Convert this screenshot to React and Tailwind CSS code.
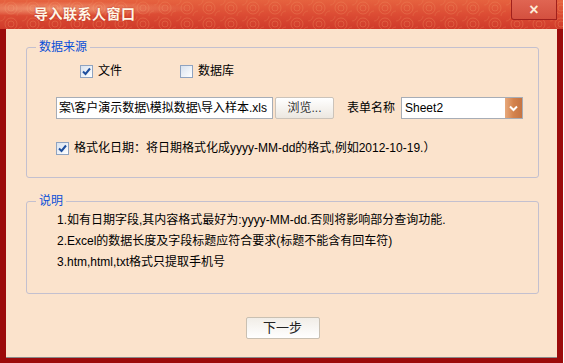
import React from 'react';

const font = "font-['Liberation_Sans','Noto_Sans_CJK_SC',sans-serif]";

function Check({ checked }) {
    return (
        <span className="w-[13px] h-[13px] shrink-0 border border-[#8fa3c0] bg-linear-to-br from-[#d9e2ee] to-white flex items-center justify-center">
            {checked && (
                <svg width="9" height="9" viewBox="0 0 9 9">
                    <path d="M1 4.5 L3.5 7 L8 1.5" stroke="#1e4f9e" strokeWidth="2" fill="none" />
                </svg>
            )}
        </span>
    );
}

function Group({ title, className, children }) {
    return (
        <div className={`relative border border-[#c3c0cf] rounded-[3px] ${className}`}>
            <span className="absolute -top-[9px] left-[9px] px-[3px] bg-[#fbe3cc] text-[12px] leading-[16px] text-[#0a4fd8]">
                {title}
            </span>
            {children}
        </div>
    );
}

export default function App() {
    return (
        <div className={`w-[564px] h-[363px] bg-white overflow-hidden ${font}`}>
            <div className="w-[563px] h-[363px] flex flex-col bg-[#9c0b0b]">
                {/* title bar */}
                <div className="relative h-[29px] shrink-0 bg-linear-to-b from-[#e6623f] via-[#dc4c34] to-[#cf3a2a] overflow-hidden">
                    <svg className="absolute inset-0" width="563" height="29">
                        <defs>
                            <pattern id="sw" width="22" height="16" patternUnits="userSpaceOnUse">
                                <circle cx="11" cy="8" r="6" stroke="#f08a5a" strokeWidth="1" fill="none" opacity="0.35" />
                                <circle cx="11" cy="8" r="3" stroke="#f08a5a" strokeWidth="1" fill="none" opacity="0.35" />
                                <circle cx="0" cy="0" r="5" stroke="#f08a5a" strokeWidth="1" fill="none" opacity="0.25" />
                                <circle cx="22" cy="16" r="5" stroke="#f08a5a" strokeWidth="1" fill="none" opacity="0.25" />
                            </pattern>
                            <radialGradient id="glow" cx="0.1" cy="0.3" r="0.25">
                                <stop offset="0" stopColor="#ffd0a8" stopOpacity="0.5" />
                                <stop offset="1" stopColor="#ffd0a8" stopOpacity="0" />
                            </radialGradient>
                        </defs>
                        <rect width="563" height="29" fill="url(#sw)" />
                        <rect width="563" height="29" fill="url(#glow)" />
                    </svg>
                    <div className="relative h-full pl-[34px] flex items-center text-[14px] font-bold text-[#fff6e6] tracking-[0.5px] [text-shadow:0_0_2px_#b03020]">
                        导入联系人窗口
                    </div>
                    <div className="absolute top-0 right-[6px] w-[46px] h-[20px] border border-t-0 border-[#a0201c] rounded-bl-[3px] bg-linear-to-b from-[#e06552] to-[#d4503f] flex items-center justify-center text-[#fdecd8] text-[16px] font-bold leading-none">
                        ×
                    </div>
                </div>

                {/* body */}
                <div className="flex-1 flex flex-col mx-[6px] bg-[#fbe3cc] border-b border-[#8a8a8a] text-[12px] text-black pl-[20px] pr-[18px]">
                    <Group title="数据来源" className="mt-[18px] h-[131px] pl-[29px] pt-[17px]">
                        <div className="flex items-center h-[13px] pl-[24px]">
                            <div className="w-[100px] flex items-center gap-[5px]">
                                <Check checked />
                                <span className="leading-[13px]">文件</span>
                            </div>
                            <div className="flex items-center gap-[5px]">
                                <Check />
                                <span className="leading-[13px]">数据库</span>
                            </div>
                        </div>
                        <div className="flex items-center mt-[19px] h-[22px]">
                            <div className="w-[217px] h-[22px] border border-[#a7adb6] bg-white flex items-center px-[2px] whitespace-nowrap overflow-hidden">
                                案\客户演示数据\模拟数据\导入样本.xls
                            </div>
                            <button className="ml-[2px] w-[59px] h-[22px] border border-[#cbc3ba] rounded-[2px] bg-linear-to-b from-white to-[#ece7e0] text-[#333] text-[12px] flex items-center justify-center">
                                浏览...
                            </button>
                            <span className="ml-[13px] text-[12px]">表单名称</span>
                            <div className="ml-[6px] w-[122px] h-[22px] border border-[#a7adb6] bg-white flex items-center">
                                <span className="flex-1 pl-[3px]">Sheet2</span>
                                <span className="w-[17px] h-[20px] bg-linear-to-r from-[#e7a97c] via-[#d4834d] to-[#c57443] flex items-center justify-center">
                                    <svg width="9" height="7" viewBox="0 0 9 7">
                                        <path d="M1 1.5 L4.5 5 L8 1.5" stroke="white" strokeWidth="2" fill="none" />
                                    </svg>
                                </span>
                            </div>
                        </div>
                        <div className="flex items-center gap-[5px] mt-[23px] h-[13px]">
                            <Check checked />
                            <span className="leading-[13px] whitespace-nowrap">格式化日期：将日期格式化成yyyy-MM-dd的格式,例如2012-10-19.）</span>
                        </div>
                    </Group>

                    <Group title="说明" className="mt-[23px] h-[93px] pl-[30px] pt-[7px]">
                        <div className="h-[21px] flex items-center">1.如有日期字段,其内容格式最好为:yyyy-MM-dd.否则将影响部分查询功能.</div>
                        <div className="h-[21px] flex items-center">2.Excel的数据长度及字段标题应符合要求(标题不能含有回车符)</div>
                        <div className="h-[21px] flex items-center">3.htm,html,txt格式只提取手机号</div>
                    </Group>

                    <div className="flex justify-center mt-[23px]">
                        <button className="w-[74px] h-[22px] border border-[#c9c0b2] rounded-[2px] bg-linear-to-b from-[#f1ede7] to-white text-[13px] text-[#222] flex items-center justify-center">
                            下一步
                        </button>
                    </div>
                </div>
                <div className="h-[5px] shrink-0" />
            </div>
        </div>
    );
}
